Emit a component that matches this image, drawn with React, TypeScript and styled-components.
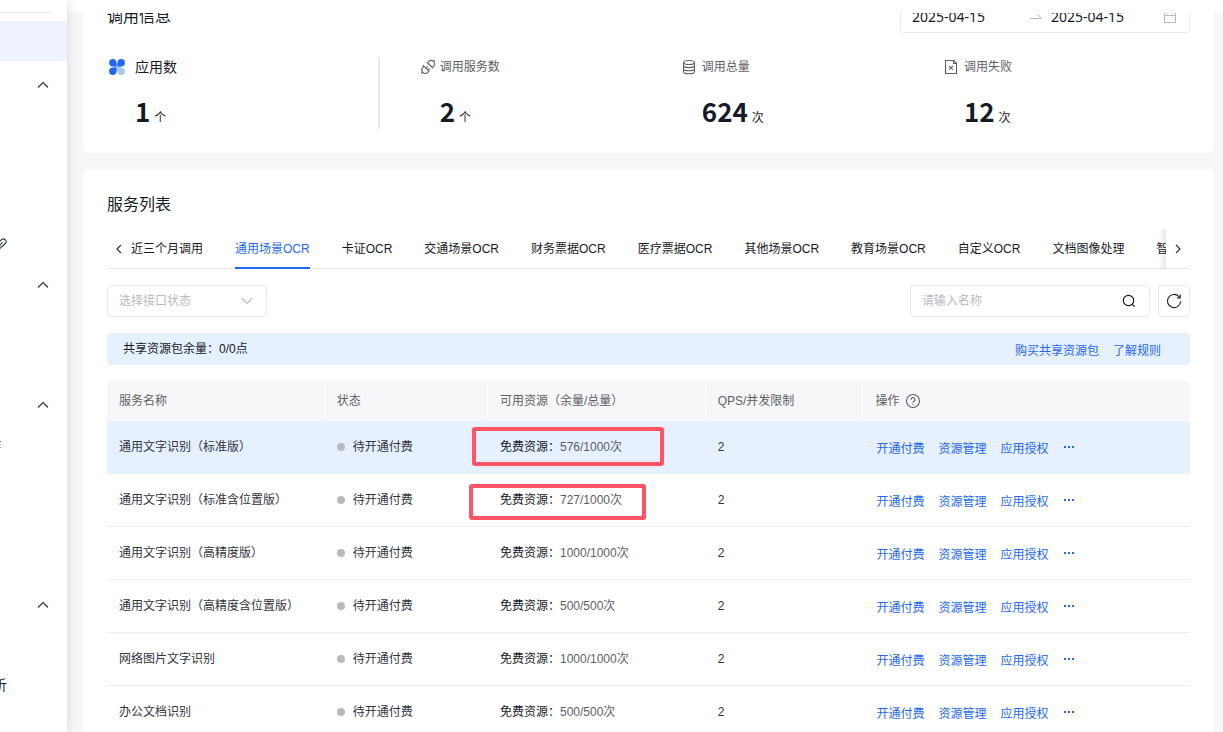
import React from "react";
import styled, { createGlobalStyle } from "styled-components";

const GlobalStyle = createGlobalStyle`
  * { box-sizing: border-box; }
  body {
    margin: 0;
    background: #f7f7f9;
    color: #151b26;
    font-family: "Liberation Sans", "Noto Sans CJK SC", sans-serif;
    font-size: 12px;
    line-height: 20px;
  }
  button, input, select { font: inherit; color: inherit; }
`;

const Shell = styled.div`
  display: flex;
  height: 100vh;
  overflow: hidden;
`;

const Sidebar = styled.nav`
  flex: 0 0 67px;
  min-width: 0;
  position: relative;
  z-index: 3;
  background: #fff;
  box-shadow: 0 0 10px rgba(7, 12, 20, 0.14);
`;

const SideRule = styled.div`
  width: 51px;
  height: 13px;
  margin-bottom: 8px;
  border-bottom: 1px solid #e8e9eb;
`;

const SideActive = styled.div`
  height: 40px;
  margin-bottom: 4px;
  background: #eef3fe;
`;

const SideRow = styled.div<{ $far?: boolean }>`
  display: flex;
  align-items: center;
  justify-content: flex-end;
  height: 40px;
  padding-right: ${(p) => (p.$far ? "66px" : "60px")};
  font-size: 14px;
  overflow: hidden;
  white-space: nowrap;

  svg { flex: none; }
`;

const SideToggle = styled.button`
  display: flex;
  align-items: center;
  justify-content: flex-end;
  width: 100%;
  height: 40px;
  padding: 0 18px 0 0;
  border: 0;
  background: none;
`;

const Main = styled.main`
  flex: 1;
  min-width: 0;
`;

const TopBar = styled.header`
  position: relative;
  z-index: 2;
  height: 13px;
  background: #fff;
`;

const Content = styled.div`
  display: flex;
  flex-direction: column;
  gap: 16px;
  margin-top: -36px;
  padding: 0 9px 0 16px;
`;

const Card = styled.section`
  padding: 24px;
  border-radius: 6px;
  background: #fff;
`;

const CardHead = styled.div`
  display: flex;
  align-items: center;
  justify-content: space-between;
`;

const CardTitle = styled.h2`
  margin: 0;
  font-size: 16px;
  font-weight: 400;
  line-height: 24px;
`;

const DateRange = styled.div`
  display: flex;
  align-items: center;
  width: 290px;
  height: 32px;
  padding: 0 12px 0 11px;
  border: 1px solid #e8e9eb;
  border-radius: 4px;
`;

const DateInput = styled.input`
  width: 107px;
  padding: 0;
  border: 0;
  outline: 0;
  background: none;
  font-family: "Noto Sans", sans-serif;
  font-size: 14px;
`;

const DateArrow = styled.span`
  display: flex;
  width: 32px;
  padding-left: 10px;
`;

const Push = styled.span`
  display: flex;
  margin-left: auto;
`;

const Stats = styled.div`
  display: flex;
  height: 72px;
  margin-top: 24px;
`;

const AppStat = styled.div`
  flex: 0 0 25%;
`;

const Divider = styled.div`
  flex: 0 0 2px;
  background: #e8e9eb;
`;

const StatGroup = styled.div`
  display: grid;
  flex: 1;
  grid-template-columns: repeat(3, 1fr);
  padding-left: 24px;
`;

const Stat = styled.div`
  padding-left: 16px;
`;

const StatLabel = styled.div<{ $main?: boolean }>`
  display: grid;
  grid-template-columns: ${(p) => (p.$main ? "28px" : "20px")} auto;
  align-items: center;
  height: 20px;
  color: ${(p) => (p.$main ? "#151b26" : "#5c5f66")};
  font-size: ${(p) => (p.$main ? "14px" : "12px")};
`;

const StatValue = styled.div<{ $main?: boolean }>`
  display: flex;
  align-items: baseline;
  gap: 4px;
  margin-top: 18px;
  padding-left: ${(p) => (p.$main ? "28px" : "20px")};
  line-height: 32px;

  strong {
    font-family: "Noto Sans CJK SC", sans-serif;
    font-size: 26px;
    font-weight: 700;
  }
`;

const TabBar = styled.div`
  display: flex;
  height: 40px;
  margin-top: 12px;
  border-bottom: 1px solid #e8e9eb;
`;

const TabArrow = styled.button`
  display: flex;
  flex: 0 0 24px;
  align-items: center;
  justify-content: center;
  padding: 0;
  border: 0;
  background: none;
`;

const TabView = styled.div`
  position: relative;
  flex: 1;
  min-width: 0;
  height: 40px;
  overflow: hidden;

  &::after {
    content: "";
    position: absolute;
    top: 0;
    right: 0;
    width: 8px;
    height: 100%;
    background: linear-gradient(to right, rgba(0, 0, 0, 0), rgba(0, 0, 0, 0.09));
  }
`;

const TabList = styled.div`
  display: flex;
  gap: 32px;
`;

const Tab = styled.button<{ $active?: boolean }>`
  flex: none;
  height: 40px;
  padding: 0;
  border: solid ${(p) => (p.$active ? "#2468f2" : "transparent")};
  border-width: 2px 0;
  border-top-color: transparent;
  background: none;
  color: ${(p) => (p.$active ? "#2468f2" : "#151b26")};
  white-space: nowrap;
`;

const Filters = styled.div`
  display: flex;
  gap: 8px;
  margin-top: 16px;
`;

const Field = styled.label<{ $width: string }>`
  display: flex;
  align-items: center;
  width: ${(p) => p.$width};
  height: 32px;
  padding: 0 13px 0 11px;
  border: 1px solid #e8e9eb;
  border-radius: 4px;
`;

const Select = styled.select`
  flex: 1;
  min-width: 0;
  padding: 0;
  border: 0;
  outline: 0;
  appearance: none;
  background: none;
  color: #b8babf;
`;

const Search = styled.input`
  flex: 1;
  min-width: 0;
  padding: 0;
  border: 0;
  outline: 0;
  background: none;
  &::placeholder { color: #b8babf; }
`;

const SearchSlot = styled.div`
  margin-left: auto;
`;

const IconButton = styled.button`
  display: flex;
  align-items: center;
  justify-content: center;
  width: 32px;
  height: 32px;
  padding: 0;
  border: 1px solid #e8e9eb;
  border-radius: 4px;
  background: #fff;
`;

const Notice = styled.div`
  display: flex;
  align-items: center;
  justify-content: space-between;
  height: 32px;
  margin-top: 16px;
  padding: 0 28px 0 16px;
  border-radius: 4px;
  background: #e6f0ff;
`;

const Links = styled.div`
  display: flex;
  align-items: center;
  gap: 14px;
  padding: 4px 1px 0;
`;

const Link = styled.a`
  color: #2468f2;
  text-decoration: none;
  white-space: nowrap;
`;

const More = styled.button`
  display: flex;
  padding: 0;
  margin-bottom: 4px;
  border: 0;
  background: none;
`;

const Table = styled.table`
  width: 100%;
  margin-top: 16px;
  border-spacing: 0;
  table-layout: fixed;
`;

const Th = styled.th`
  height: 40px;
  padding: 0 12px;
  border-right: 1px solid #fff;
  background: #f7f7f9;
  color: #5c5f66;
  font-weight: 400;
  text-align: left;
  white-space: nowrap;

  &:first-child { border-top-left-radius: 4px; }
  &:last-child { border-right: 0; border-top-right-radius: 4px; }
`;

const Row = styled.tr<{ $hover?: boolean }>`
  background: ${(p) => (p.$hover ? "#e6f0ff" : "#fff")};
  td { border-bottom-color: ${(p) => (p.$hover ? "#e6f0ff" : "#ededf0")}; }
`;

const Td = styled.td`
  position: relative;
  height: 53px;
  padding: 0 12px;
  border-bottom: 1px solid;
  color: #303540;
  white-space: nowrap;
`;

const Inline = styled.span`
  display: flex;
  align-items: center;
  gap: 6px;
`;

const Status = styled.span`
  display: flex;
  align-items: center;
  gap: 8px;

  &::before {
    content: "";
    width: 8px;
    height: 8px;
    border-radius: 50%;
    background: #b8babf;
  }
`;

const Quota = styled.span`
  color: #151b26;
  span { color: #5c5f66; }
`;

const Mark = styled.span<{ $wide?: boolean }>`
  position: absolute;
  top: ${(p) => (p.$wide ? "6px" : "10px")};
  left: ${(p) => (p.$wide ? "-16px" : "-19px")};
  z-index: 1;
  width: ${(p) => (p.$wide ? "192px" : "177px")};
  height: ${(p) => (p.$wide ? "39px" : "36px")};
  border: 4px solid #ff5366;
  border-radius: 3px;
`;

type Dir = "up" | "down" | "left" | "right";
const chevrons: Record<Dir, string> = {
  up: "M1 8.5 6 3.5l5 5",
  down: "M1 3.5 6 8.5l5-5",
  left: "M8 2 4 6l4 4",
  right: "M4 2l4 4-4 4",
};

const Chevron = ({ dir, color = "#303540" }: { dir: Dir; color?: string }) => (
  <svg width="12" height="12" viewBox="0 0 12 12" fill="none" stroke={color} strokeWidth="1.2">
    <path d={chevrons[dir]} />
  </svg>
);

const AppsIcon = () => (
  <svg width="20" height="20" viewBox="0 0 20 20">
    <path d="M6 6h8v8H6z" fill="#a8c7ff" />
    <g fill="#2468f2">
      <path d="M5.8 2a3.7 3.7 0 0 1 3.7 3.7v3.7H5.8A3.7 3.7 0 0 1 5.8 2z" />
      <path d="M14.2 2a3.7 3.7 0 0 1 0 7.4h-3.7V5.7A3.7 3.7 0 0 1 14.2 2z" />
      <path d="M5.8 10.5h3.7v3.7a3.7 3.7 0 1 1-3.7-3.7z" />
    </g>
    <path d="M10.5 10.5h3.7a3.7 3.7 0 1 1-3.7 3.7z" fill="#a8c7ff" />
  </svg>
);

const PlugIcon = () => (
  <svg width="16" height="16" viewBox="0 0 16 16" fill="none" stroke="#5c5f66" strokeWidth="1.1">
    <path d="M3.4 6.7 8.9 12.2l-1.3 1.2a3.3 3.3 0 0 1-4.8 0 3.4 3.4 0 0 1 0-4.8z" />
    <path d="M7.3 3.5l5.3 5.2 1-1.1a3.4 3.4 0 0 0-4.9-5z" />
    <path d="M1 14.7l1.8-1.6M13.2 2.8l1.5-1.5M6 9.3l1.7-1.7M8.1 11.2l1.7-1.7" />
  </svg>
);

const DatabaseIcon = () => (
  <svg width="16" height="16" viewBox="0 0 16 16" fill="none" stroke="#5c5f66" strokeWidth="1.1">
    <ellipse cx="7" cy="3.5" rx="5.500" ry="2" />
    <path d="M1.500 3.500v9.200c0 1.100 2.500 2 5.500 2s5.500-.9 5.500-2V3.500M1.500 6.600c0 1.100 2.500 2 5.500 2s5.500-.9 5.500-2M1.500 9.700c0 1.100 2.500 2 5.500 2s5.500-.9 5.500-2" />
  </svg>
);

const FailIcon = () => (
  <svg width="16" height="16" viewBox="0 0 16 16" fill="none" stroke="#5c5f66" strokeWidth="1.1">
    <path d="M1.500 1.500h8.300l2.700 2.800v10.200h-11zM9.500 1.500v3h3" />
    <path d="M5 6.900l4 3.800M9 6.900l-4 3.800" />
  </svg>
);

const CalendarIcon = () => (
  <svg width="14" height="14" viewBox="0 0 14 14" fill="none" stroke="#b8babf">
    <path d="M1.500 2.500h11v10h-11zM1.500 5.500h11M4.500 1v3M9.500 1v3" />
  </svg>
);

const ArrowIcon = () => (
  <svg width="14" height="12" viewBox="0 0 14 12" fill="none" stroke="#b8babf">
    <path d="M1 7.500h11.500L9 4" />
  </svg>
);

const SearchIcon = () => (
  <svg width="14" height="14" viewBox="0 0 14 14" fill="none" stroke="#151b26" strokeWidth="1.2">
    <circle cx="6.500" cy="6.500" r="5.200" />
    <path d="M10.300 10.300l2.400 2.400" />
  </svg>
);

const RefreshIcon = () => (
  <svg width="16" height="16" viewBox="0 0 16 16" fill="none" stroke="#151b26" strokeWidth="1.1">
    <path d="M14.600 8.200A6.600 6.600 0 1 1 12.900 3.600l1 1.200" />
    <path d="M14.200 1.500v3.500h-3.400" />
  </svg>
);

const HelpIcon = () => (
  <svg width="16" height="16" viewBox="0 0 16 16" fill="none" stroke="#5c5f66" strokeWidth="1.1">
    <circle cx="8" cy="8" r="6.500" />
    <path d="M6 6.700a2 2 0 1 1 3 1.600c-.7.400-1 .7-1 1.500M8 10.700v1.200" />
  </svg>
);

const LinkIcon = () => (
  <svg width="14" height="14" viewBox="0 0 14 14" fill="none" stroke="#303540" strokeWidth="1.1">
    <path d="M5.500 8.500l4-4M6.500 3.700l2-2a2.600 2.600 0 0 1 3.800 3.800l-3 3a2.600 2.600 0 0 1-2.800.4M7.500 10.300l-2 2a2.600 2.600 0 0 1-3.800-3.800l3-3" />
  </svg>
);

const DotsIcon = () => (
  <svg width="12" height="4" viewBox="0 0 12 4" fill="#2468f2">
    <path d="M1 1h2v2H1zM5 1h2v2H5zM9 1h2v2H9z" />
  </svg>
);

const sideItems = [
  "toggle", "", "", "", "link", "toggle", "", "", "toggle", "作", "", "", "", "toggle", "", "析",
];

const tabs = [
  "近三个月调用", "通用场景OCR", "卡证OCR", "交通场景OCR", "财务票据OCR", "医疗票据OCR",
  "其他场景OCR", "教育场景OCR", "自定义OCR", "文档图像处理", "智",
];

const stats = [
  { label: "调用服务数", value: "2", unit: "个", icon: <PlugIcon /> },
  { label: "调用总量", value: "624", unit: "次", icon: <DatabaseIcon /> },
  { label: "调用失败", value: "12", unit: "次", icon: <FailIcon /> },
];

const services = [
  { name: "通用文字识别（标准版）", quota: "576/1000次", mark: "wide" },
  { name: "通用文字识别（标准含位置版）", quota: "727/1000次", mark: "narrow" },
  { name: "通用文字识别（高精度版）", quota: "1000/1000次" },
  { name: "通用文字识别（高精度含位置版）", quota: "500/500次" },
  { name: "网络图片文字识别", quota: "1000/1000次" },
  { name: "办公文档识别", quota: "500/500次" },
];

const actions = ["开通付费", "资源管理", "应用授权"];

export default function App() {
  return (
    <Shell>
      <GlobalStyle />
      <Sidebar>
        <SideRule />
        <SideActive />
        {sideItems.map((item, i) =>
          item === "toggle" ? (
            <SideToggle key={i} aria-label="收起">
              <Chevron dir="up" />
            </SideToggle>
          ) : (
            <SideRow key={i} $far={item === "作"}>{item === "link" ? <LinkIcon /> : item}</SideRow>
          )
        )}
      </Sidebar>
      <Main>
        <TopBar />
        <Content>
          <Card>
            <CardHead>
              <CardTitle>调用信息</CardTitle>
              <DateRange>
                <DateInput aria-label="开始日期" defaultValue="2025-04-15" />
                <DateArrow><ArrowIcon /></DateArrow>
                <DateInput aria-label="结束日期" defaultValue="2025-04-15" />
                <Push><CalendarIcon /></Push>
              </DateRange>
            </CardHead>
            <Stats>
              <AppStat>
                <StatLabel $main><AppsIcon />应用数</StatLabel>
                <StatValue $main><strong>1</strong>个</StatValue>
              </AppStat>
              <Divider />
              <StatGroup>
                {stats.map((s) => (
                  <Stat key={s.label}>
                    <StatLabel>{s.icon}{s.label}</StatLabel>
                    <StatValue><strong>{s.value}</strong>{s.unit}</StatValue>
                  </Stat>
                ))}
              </StatGroup>
            </Stats>
          </Card>
          <Card>
            <CardTitle>服务列表</CardTitle>
            <TabBar>
              <TabArrow aria-label="向左"><Chevron dir="left" /></TabArrow>
              <TabView>
                <TabList role="tablist">
                  {tabs.map((t, i) => (
                    <Tab key={t} role="tab" aria-selected={i === 1} $active={i === 1}>{t}</Tab>
                  ))}
                </TabList>
              </TabView>
              <TabArrow aria-label="向右"><Chevron dir="right" /></TabArrow>
            </TabBar>
            <Filters>
              <Field $width="160px">
                <Select aria-label="接口状态" defaultValue="">
                  <option value="">选择接口状态</option>
                </Select>
                <Chevron dir="down" color="#b8babf" />
              </Field>
              <SearchSlot>
                <Field $width="240px">
                  <Search aria-label="名称" placeholder="请输入名称" />
                  <SearchIcon />
                </Field>
              </SearchSlot>
              <IconButton aria-label="刷新"><RefreshIcon /></IconButton>
            </Filters>
            <Notice>
              <span>共享资源包余量：0/0点</span>
              <Links>
                <Link href="#buy">购买共享资源包</Link>
                <Link href="#rules">了解规则</Link>
              </Links>
            </Notice>
            <Table>
              <colgroup>
                <col width="200" />
                <col width="150" />
                <col width="200" />
                <col width="145" />
                <col width="300" />
              </colgroup>
              <thead>
                <tr>
                  <Th>服务名称</Th>
                  <Th>状态</Th>
                  <Th>可用资源（余量/总量）</Th>
                  <Th>QPS/并发限制</Th>
                  <Th><Inline>操作<HelpIcon /></Inline></Th>
                </tr>
              </thead>
              <tbody>
                {services.map((s, i) => (
                  <Row key={s.name} $hover={i === 0}>
                    <Td>{s.name}</Td>
                    <Td><Status>待开通付费</Status></Td>
                    <Td>
                      <Quota>免费资源：<span>{s.quota}</span></Quota>
                      {s.mark && <Mark $wide={s.mark === "wide"} />}
                    </Td>
                    <Td>2</Td>
                    <Td>
                      <Links>
                        {actions.map((a) => <Link key={a} href="#action">{a}</Link>)}
                        <More aria-label="更多"><DotsIcon /></More>
                      </Links>
                    </Td>
                  </Row>
                ))}
              </tbody>
            </Table>
          </Card>
        </Content>
      </Main>
    </Shell>
  );
}
